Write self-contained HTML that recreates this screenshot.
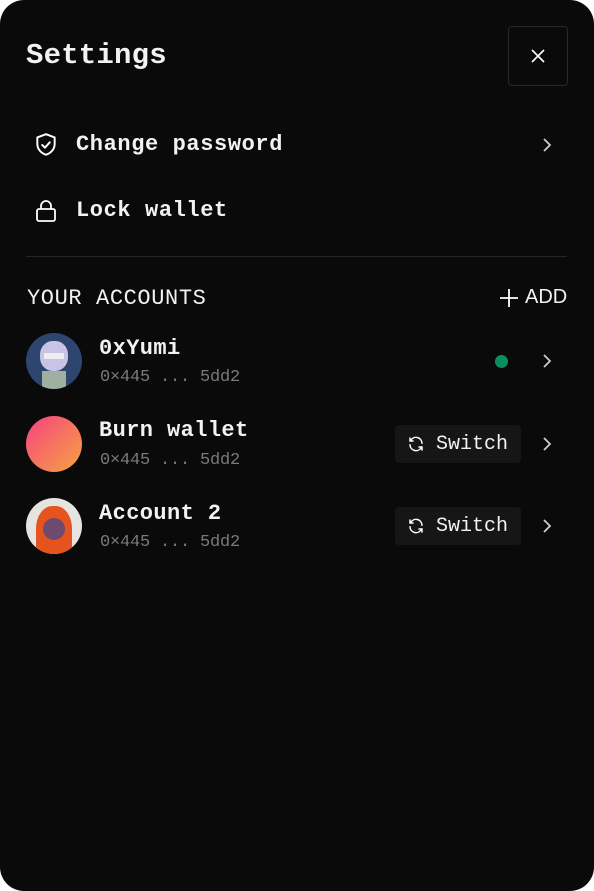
<!DOCTYPE html>
<html><head><style>
html,body{margin:0;padding:0;background:#fff;width:594px;height:891px;overflow:hidden}
.card{position:absolute;left:0;top:0;width:594px;height:891px;background:#0a0a0a;border-radius:24px;font-family:"Liberation Mono",monospace;color:#f2f2f2}
.abs{position:absolute}
.t{position:absolute;white-space:nowrap}
.sw{position:absolute;left:395px;width:126px;height:38px;background:#161616;border-radius:4px}
.addr{font-size:17px;color:#7a7a7a;letter-spacing:-0.2px}
.name{font-size:22px;font-weight:bold;letter-spacing:0.4px}
</style></head><body><div class="card">
<div class="t" style="left:26px;top:39px;font-size:29px;font-weight:bold;letter-spacing:0.2px">Settings</div>
<div class="abs" style="left:508px;top:26px;width:60px;height:60px;border:1px solid #2a2a2a;border-radius:4px;box-sizing:border-box"></div>
<svg class="abs" style="left:530px;top:48px" width="16" height="16" viewBox="0 0 16 16"><path d="M2 2L14 14M14 2L2 14" stroke="#fff" stroke-width="1.6"/></svg>

<svg class="abs" style="left:33px;top:132px" width="26" height="26" viewBox="0 0 24 24" fill="none" stroke="#fff" stroke-width="1.8" stroke-linejoin="round" stroke-linecap="round"><path d="M12 2L20 5V11C20 16 16.5 19.5 12 21C7.5 19.5 4 16 4 11V5Z"/><path d="M8.5 12L11 14.5L15.5 9.5"/></svg>
<div class="t" style="left:76px;top:132px;font-size:22px;font-weight:bold;letter-spacing:0.6px">Change password</div>
<svg class="abs" style="left:540px;top:137px" width="14" height="16" viewBox="0 0 14 16"><path d="M4 2L10 8L4 14" stroke="#ccc" stroke-width="1.8" fill="none"/></svg>

<svg class="abs" style="left:34px;top:198px" width="24" height="26" viewBox="0 0 24 26" fill="none" stroke="#fff" stroke-width="1.8"><rect x="3" y="11" width="18" height="12" rx="2"/><path d="M7 11V8a5 5 0 0 1 10 0v3"/></svg>
<div class="t" style="left:76px;top:198px;font-size:22px;font-weight:bold;letter-spacing:0.6px">Lock wallet</div>

<div class="abs" style="left:26px;top:256px;width:541px;height:1px;background:#262626"></div>

<div class="t" style="left:27px;top:286px;font-size:22px;letter-spacing:0.6px">YOUR ACCOUNTS</div>
<svg class="abs" style="left:499px;top:288px" width="20" height="20" viewBox="0 0 20 20"><path d="M10 1V19M1 10H19" stroke="#fff" stroke-width="1.8"/></svg>
<div class="t" style="left:525px;top:286px;font-family:'Liberation Sans',sans-serif;font-size:20px">ADD</div>

<!-- acct 1 -->
<div class="abs" style="left:26px;top:333px;width:56px;height:56px;border-radius:50%;background:#2e4570;overflow:hidden">
<div class="abs" style="left:14px;top:8px;width:28px;height:30px;border-radius:45%;background:#c9c4e6"></div>
<div class="abs" style="left:18px;top:20px;width:20px;height:6px;background:#eee"></div>
<div class="abs" style="left:16px;top:38px;width:24px;height:20px;background:#9fb0a0"></div></div>
<div class="t name" style="left:99px;top:336px">0xYumi</div>
<div class="t addr" style="left:100px;top:368px">0×445 ... 5dd2</div>
<div class="abs" style="left:495px;top:355px;width:13px;height:13px;border-radius:50%;background:#0a8f5c"></div>
<svg class="abs" style="left:540px;top:353px" width="14" height="16" viewBox="0 0 14 16"><path d="M4 2L10 8L4 14" stroke="#ccc" stroke-width="1.8" fill="none"/></svg>

<!-- acct 2 -->
<div class="abs" style="left:26px;top:416px;width:56px;height:56px;border-radius:50%;background:linear-gradient(135deg,#f6427f,#f5a442)"></div>
<div class="t name" style="left:99px;top:418px">Burn wallet</div>
<div class="t addr" style="left:100px;top:451px">0×445 ... 5dd2</div>
<div class="sw" style="top:425px"></div>
<svg class="abs" style="left:407px;top:435px" width="18" height="18" viewBox="0 0 24 24" fill="none" stroke="#fff" stroke-width="2" stroke-linecap="round"><path d="M20 11A8 8 0 0 0 5.5 6.5L4 8M4 4v4h4M4 13a8 8 0 0 0 14.5 4.5L20 16M20 20v-4h-4"/></svg>
<div class="t" style="left:436px;top:433px;font-size:20px">Switch</div>
<svg class="abs" style="left:540px;top:436px" width="14" height="16" viewBox="0 0 14 16"><path d="M4 2L10 8L4 14" stroke="#ccc" stroke-width="1.8" fill="none"/></svg>

<!-- acct 3 -->
<div class="abs" style="left:26px;top:498px;width:56px;height:56px;border-radius:50%;background:#e6e4e0;overflow:hidden">
<div class="abs" style="left:10px;top:8px;width:36px;height:50px;border-radius:45% 45% 10% 10%;background:#e5531f"></div>
<div class="abs" style="left:17px;top:20px;width:22px;height:22px;border-radius:50%;background:#6d4a6e"></div></div>
<div class="t name" style="left:99px;top:501px">Account 2</div>
<div class="t addr" style="left:100px;top:533px">0×445 ... 5dd2</div>
<div class="sw" style="top:507px"></div>
<svg class="abs" style="left:407px;top:517px" width="18" height="18" viewBox="0 0 24 24" fill="none" stroke="#fff" stroke-width="2" stroke-linecap="round"><path d="M20 11A8 8 0 0 0 5.5 6.5L4 8M4 4v4h4M4 13a8 8 0 0 0 14.5 4.5L20 16M20 20v-4h-4"/></svg>
<div class="t" style="left:436px;top:515px;font-size:20px">Switch</div>
<svg class="abs" style="left:540px;top:518px" width="14" height="16" viewBox="0 0 14 16"><path d="M4 2L10 8L4 14" stroke="#ccc" stroke-width="1.8" fill="none"/></svg>
</div></body></html>
